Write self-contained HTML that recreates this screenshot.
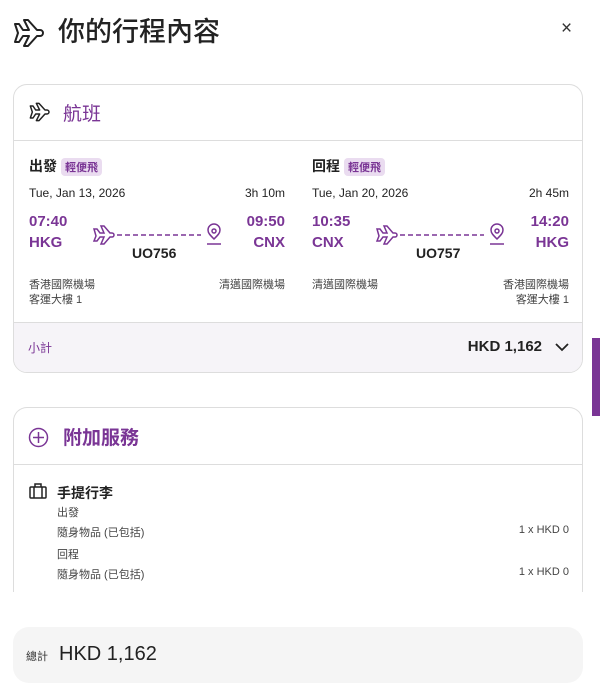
<!DOCTYPE html>
<html><head><meta charset="utf-8"><style>
*{margin:0;padding:0;box-sizing:border-box}
body{width:600px;height:690px;background:#fff;font-family:"Liberation Sans","Noto Sans CJK TC",sans-serif;color:#222;position:relative;overflow:hidden}
.abs{position:absolute}
.p{color:#7a3595}
.card{position:absolute;left:13px;width:570px;border:1px solid #ddd;border-radius:14px;background:#fff;overflow:hidden}
.b{font-weight:bold}
.tag{display:inline-block;background:#eadcf0;color:#7a3595;font-size:11px;padding:1px 4px;border-radius:4px;font-weight:bold;vertical-align:middle;margin-left:4px}
.s12{font-size:12px}
.s11{font-size:11px;color:#444}
</style></head><body>
<svg class="abs" style="left:12px;top:18px" width="32" height="30" viewBox="0 0 32 30" fill="none" stroke="#222" stroke-width="2" stroke-linejoin="round"><path d="M3 6h4l4 6h6L12 2h4l9 10h3a3 3 0 0 1 0 6h-3l-9 10h-4l5-10h-6l-4 6H3l3-9z"/></svg>
<div class="abs" style="left:58px;top:10px;font-size:27px;font-weight:500">你的行程內容</div>
<div class="abs" style="left:561px;top:18px;font-size:19px;color:#333">×</div>

<div class="card" style="top:84px;height:289px">
  <svg class="abs" style="left:14px;top:17px" width="22" height="20" viewBox="0 0 32 30" fill="none" stroke="#222" stroke-width="2.2" stroke-linejoin="round"><path d="M3 6h4l4 6h6L12 2h4l9 10h3a3 3 0 0 1 0 6h-3l-9 10h-4l5-10h-6l-4 6H3l3-9z"/></svg>
  <div class="abs p" style="left:49px;top:14px;font-size:19px">航班</div>
  <div class="abs" style="left:0;top:55px;width:100%;border-top:1px solid #ddd"></div>

  <div class="abs" style="left:15px;top:71px;width:256px">
    <div><span class="b" style="font-size:14px">出發</span><span class="tag">輕便飛</span></div>
    <div class="s12" style="margin-top:10px;display:flex;justify-content:space-between"><span>Tue, Jan 13, 2026</span><span>3h 10m</span></div>
    <div class="p b" style="margin-top:11px;font-size:15px;display:flex;justify-content:space-between;line-height:21px"><span>07:40<br>HKG</span><span style="text-align:right">09:50<br>CNX</span></div>
    <div class="b" style="position:absolute;left:103px;top:89px;font-size:14px">UO756</div>
    <svg class="abs" style="left:63px;top:67px" width="130" height="24" viewBox="0 0 130 24" fill="none" stroke="#7a3595" stroke-width="1.5"><path d="M2 6h3l3 4h4L9 3h3l6 7h2a2 2 0 0 1 0 4h-2l-6 7H9l3-7H8l-3 4H2l2-5z"/><path d="M25 12h84" stroke-dasharray="5 3"/><path d="M122 16c-4-4-6-6-6-9a6 6 0 0 1 12 0c0 3-2 5-6 9z"/><circle cx="122" cy="8" r="2"/><path d="M115 21h14"/></svg>
    <div class="s11" style="margin-top:25px;display:flex;justify-content:space-between;line-height:15px"><span>香港國際機場<br>客運大樓 1</span><span>清邁國際機場</span></div>
  </div>

  <div class="abs" style="left:298px;top:71px;width:257px">
    <div><span class="b" style="font-size:14px">回程</span><span class="tag">輕便飛</span></div>
    <div class="s12" style="margin-top:10px;display:flex;justify-content:space-between"><span>Tue, Jan 20, 2026</span><span>2h 45m</span></div>
    <div class="p b" style="margin-top:11px;font-size:15px;display:flex;justify-content:space-between;line-height:21px"><span>10:35<br>CNX</span><span style="text-align:right">14:20<br>HKG</span></div>
    <div class="b" style="position:absolute;left:104px;top:89px;font-size:14px">UO757</div>
    <svg class="abs" style="left:63px;top:67px" width="130" height="24" viewBox="0 0 130 24" fill="none" stroke="#7a3595" stroke-width="1.5"><path d="M2 6h3l3 4h4L9 3h3l6 7h2a2 2 0 0 1 0 4h-2l-6 7H9l3-7H8l-3 4H2l2-5z"/><path d="M25 12h84" stroke-dasharray="5 3"/><path d="M122 16c-4-4-6-6-6-9a6 6 0 0 1 12 0c0 3-2 5-6 9z"/><circle cx="122" cy="8" r="2"/><path d="M115 21h14"/></svg>
    <div class="s11" style="margin-top:25px;display:flex;justify-content:space-between;line-height:15px"><span>清邁國際機場</span><span style="text-align:right">香港國際機場<br>客運大樓 1</span></div>
  </div>

  <div class="abs" style="left:0;top:237px;width:100%;height:52px;background:#f6f4f8;border-top:1px solid #ddd">
    <div class="abs p s12" style="left:14px;top:16px">小計</div>
    <div class="abs b" style="right:40px;top:15px;font-size:15px">HKD 1,162</div>
    <svg class="abs" style="right:12px;top:18px" width="16" height="12" viewBox="0 0 16 12" fill="none" stroke="#222" stroke-width="1.8"><path d="M2 3l6 6 6-6"/></svg>
  </div>
</div>

<div class="card" style="top:407px;height:215px;border-bottom:none">
  <svg class="abs" style="left:14px;top:19px" width="21" height="21" viewBox="0 0 21 21" fill="none" stroke="#7a3595" stroke-width="1.5"><circle cx="10.5" cy="10.5" r="9"/><path d="M10.5 5v11M5 10.5h11"/></svg>
  <div class="abs p b" style="left:49px;top:15px;font-size:19px">附加服務</div>
  <div class="abs" style="left:0;top:56px;width:100%;border-top:1px solid #ddd"></div>
  <svg class="abs" style="left:15px;top:75px" width="18" height="16" viewBox="0 0 18 16" fill="none" stroke="#222" stroke-width="1.5"><rect x="1" y="4" width="16" height="11" rx="1"/><path d="M6 4V1h6v3M5 4v11M13 4v11"/></svg>
  <div class="abs b" style="left:43px;top:75px;font-size:14px">手提行李</div>
  <div class="abs s11" style="left:43px;top:96px">出發</div>
  <div class="abs s11" style="left:43px;top:116px">隨身物品 (已包括)</div>
  <div class="abs s11" style="right:13px;top:116px">1 x HKD 0</div>
  <div class="abs s11" style="left:43px;top:138px">回程</div>
  <div class="abs s11" style="left:43px;top:158px">隨身物品 (已包括)</div>
  <div class="abs s11" style="right:13px;top:158px">1 x HKD 0</div>
</div>
<div class="abs" style="left:0;top:592px;width:600px;height:98px;background:#fff"></div>
<div class="abs" style="left:13px;top:627px;width:570px;height:56px;background:#f5f5f5;border-radius:16px">
  <div class="abs s11" style="left:13px;top:21px;color:#333">總計</div>
  <div class="abs" style="left:46px;top:16px;font-size:20px;color:#222">HKD 1,162</div>
</div>
<div class="abs" style="left:592px;top:338px;width:8px;height:78px;background:#7a3595"></div>
</body></html>
